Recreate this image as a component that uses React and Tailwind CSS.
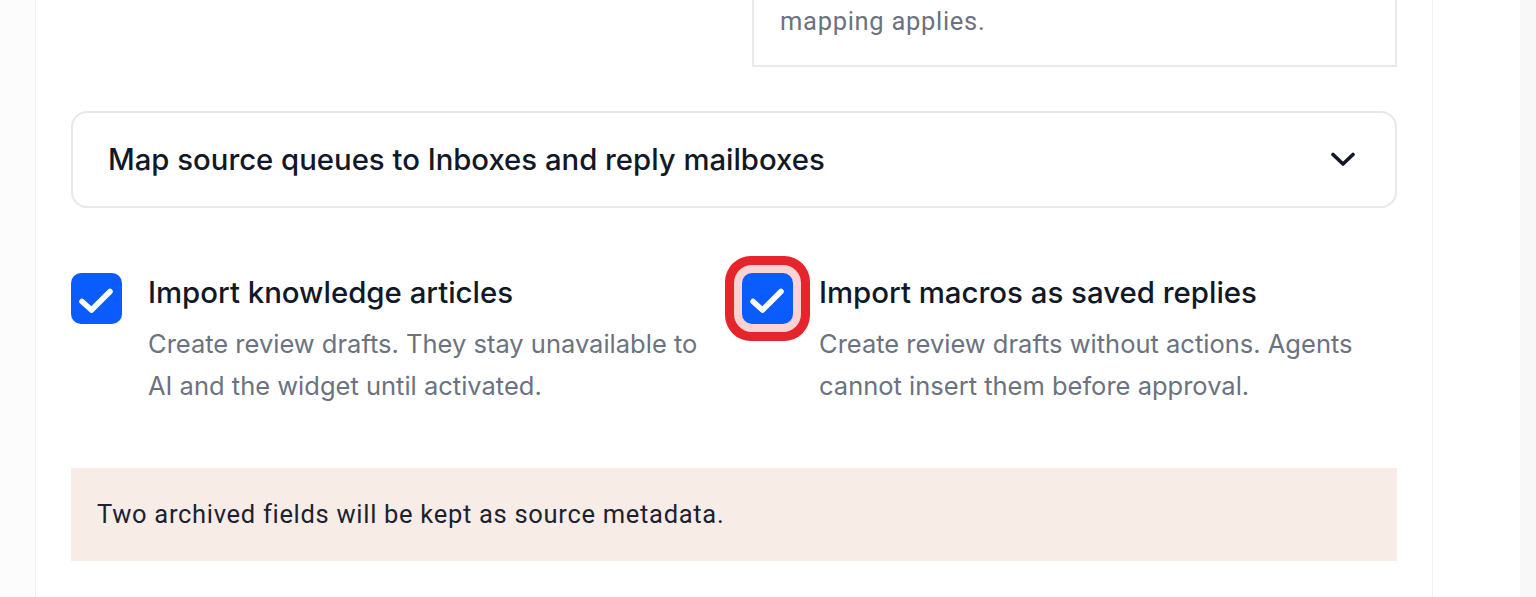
export default function App() {
  const Check = () => (
    <svg width="51" height="51" viewBox="0 0 51 51" fill="none">
      <path d="M11 28.5 L20.5 37 L39 18.5" stroke="white" strokeWidth="5.5" strokeLinecap="round" strokeLinejoin="round" />
    </svg>
  );
  return (
    <div className="flex h-[597px] w-full overflow-hidden bg-white font-['Inter','Noto_Sans',sans-serif]">
      <div className="w-[35px] shrink-0 bg-[#fcfcfd]" />
      <main className="w-[1398px] shrink-0 border-x border-[#eef0f3] bg-white px-[35px]">
        <div className="ml-[681px] mt-[-61px] border-2 border-[#e8eaee] px-[26px] pt-[26px] pb-[26px] font-['Roboto','Liberation_Sans',sans-serif] text-[25.5px] leading-[36px] tracking-[0.7px] text-[#6b7280]">
          <p className="whitespace-nowrap">Unmapped statuses stay open until a priority</p>
          <p>mapping applies.</p>
        </div>

        <div className="mt-[44px] flex h-[97px] items-center justify-between rounded-[16px] border-2 border-[#e6e8ec] pl-[35px] pr-[40px]">
          <span className="text-[29.3px] font-medium text-[#111827]">Map source queues to Inboxes and reply mailboxes</span>
          <svg width="24" height="15" viewBox="0 0 24 15" fill="none">
            <path d="M2 2.5 L12 12 L22 2.5" stroke="#111827" strokeWidth="3.6" strokeLinecap="round" strokeLinejoin="round" />
          </svg>
        </div>

        <div className="mt-[65px] grid grid-cols-2 gap-x-[16px]">
          <div className="flex items-start gap-[26px]">
            <div className="flex size-[51px] shrink-0 items-center justify-center rounded-[10px] bg-[#0b5cff]">
              <Check />
            </div>
            <div className="pt-[2px]">
              <div className="text-[29.4px] font-medium leading-[36px] text-[#111827]">Import knowledge articles</div>
              <p className="mt-[12px] text-[25.5px] leading-[42px] text-[#6b7280]">Create review drafts. They stay unavailable to AI and the widget until activated.</p>
            </div>
          </div>
          <div className="flex items-start gap-[26px]">
            <div className="flex size-[51px] shrink-0 items-center justify-center rounded-[10px] bg-[#0b5cff] shadow-[0_0_0_8px_#fbd3d3,0_0_0_17px_#e5242c]">
              <Check />
            </div>
            <div className="pt-[2px]">
              <div className="text-[29.4px] font-medium leading-[36px] text-[#111827]">Import macros as saved replies</div>
              <p className="mt-[12px] text-[25.5px] leading-[42px] text-[#6b7280]">Create review drafts without actions. Agents cannot insert them before approval.</p>
            </div>
          </div>
        </div>

        <div className="mt-[61px] flex h-[93px] items-center bg-[#f8ece7] pl-[26px] font-['Roboto','Liberation_Sans',sans-serif] text-[25.5px] tracking-[0.7px] text-[#1c2230]">
          Two archived fields will be kept as source metadata.
        </div>
      </main>
      <div className="w-[87px] shrink-0 bg-white" />
      <div className="flex-1 bg-[#f8f8f9]" />
    </div>
  );
}
